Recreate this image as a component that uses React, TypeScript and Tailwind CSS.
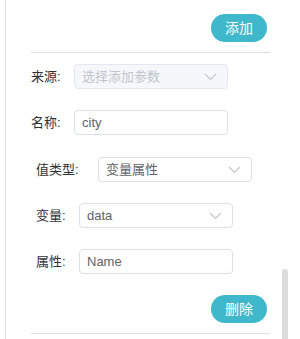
import React from 'react';

const Chevron = () => (
  <svg className="w-[13px] h-[8px]" viewBox="0 0 13 8" fill="none">
    <path d="M1 1l5.5 5.5L12 1" stroke="#c0c4cc" strokeWidth="1.1" />
  </svg>
);

const Field = ({
  label,
  labelW,
  value,
  placeholder,
  select,
  disabled,
  mt,
}: {
  label: string;
  labelW: string;
  value?: string;
  placeholder?: string;
  select?: boolean;
  disabled?: boolean;
  mt: string;
}) => (
  <div className={`flex items-center ${mt}`}>
    <span className={`${labelW} text-[13px] text-[#303133] shrink-0`}>{label}</span>
    <div
      className={`w-[154px] h-[25px] rounded-[4px] border flex items-center justify-between pl-[7px] pr-[10px] text-[13px] ${
        disabled ? 'bg-[#f5f7fa] border-[#e4e7ed]' : 'bg-white border-[#dcdfe6]'
      }`}
    >
      {value ? (
        <span className="text-[#606266]">{value}</span>
      ) : (
        <span className="text-[#c0c4cc]">{placeholder}</span>
      )}
      {select && <Chevron />}
    </div>
  </div>
);

const App = () => {
  return (
    <div
      className="relative w-[300px] h-[339px] bg-white overflow-hidden"
      style={{ fontFamily: '"Liberation Sans", "Noto Sans CJK SC", sans-serif' }}
    >
      <div className="ml-[5px] h-full border-l border-[#dcdfe6] pl-[25px] pr-[30px] pt-[14px]">
        <div className="flex justify-end pr-[3px]">
          <button className="w-[56px] h-[28px] rounded-full bg-[#3fb8cc] text-white text-[14px]">添加</button>
        </div>
        <div className="mt-[10px] h-px bg-[#dcdfe6]" />

        <Field label="来源:" labelW="w-[43px]" placeholder="选择添加参数" select disabled mt="mt-[11px]" />
        <Field label="名称:" labelW="w-[43px]" value="city" mt="mt-[21px]" />

        <div className="ml-[5px]">
          <Field label="值类型:" labelW="w-[62px]" value="变量属性" select mt="mt-[22px]" />
          <Field label="变量:" labelW="w-[43px]" value="data" select mt="mt-[21px]" />
          <Field label="属性:" labelW="w-[43px]" value="Name" mt="mt-[21px]" />
        </div>

        <div className="flex justify-end pr-[3px] mt-[21px]">
          <button className="w-[56px] h-[28px] rounded-full bg-[#3fb8cc] text-white text-[14px]">删除</button>
        </div>
        <div className="mt-[10px] h-px bg-[#dcdfe6]" />
      </div>

      <div className="absolute left-[282px] top-[269px] w-[6px] h-[80px] rounded-full bg-[#dddddf]" />
    </div>
  );
};

export default App;
